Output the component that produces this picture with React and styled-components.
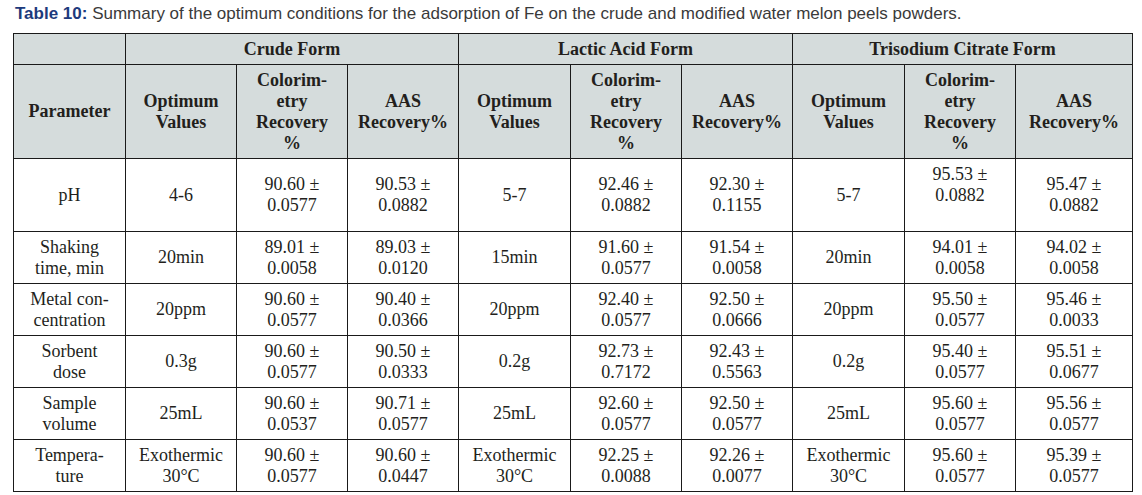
import React from "react";
import styled, { createGlobalStyle } from "styled-components";

const Global = createGlobalStyle`
  html, body { margin: 0; padding: 0; background: #ffffff; }
`;

const Page = styled.div`
  width: 1142px;
  height: 495px;
  padding: 4px 10px 0 13px;
  box-sizing: border-box;
  background: #fff;
`;

const Caption = styled.p`
  margin: 0 0 10px 2px;
  font-family: "Liberation Sans", Arial, sans-serif;
  font-size: 17px;
  line-height: 19px;
  color: #3a3a3a;
  white-space: nowrap;
`;

const Label = styled.b`
  color: #1d3a7c;
  font-weight: bold;
`;

const Table = styled.table`
  border-collapse: collapse;
  table-layout: fixed;
  width: 1119px;
  font-family: "Liberation Serif", "Times New Roman", serif;
  font-size: 18px;
  line-height: 21px;
  color: #231f1c;
  border: 1px solid #1a1a1a;
`;

const HeadCell = styled.th`
  background: #d5dcdc;
  border: 1px solid #1a1a1a;
  font-weight: bold;
  text-align: center;
  vertical-align: middle;
  padding: 0 4px;
  height: ${(p) => p.$h}px;
  box-sizing: border-box;
`;

const Cell = styled.td`
  border: 1px solid #1a1a1a;
  text-align: center;
  vertical-align: middle;
  padding: 0 4px;
  height: ${(p) => p.$h}px;
  box-sizing: border-box;
`;

const widths = [112, 111, 111, 111, 112, 111, 111, 112, 111, 117];

const Lines = ({ text }) => {
  const parts = text.split("\n");
  return parts.map((t, i) => (
    <React.Fragment key={i}>
      {t === "" ? "\u00a0" : t}
      {i < parts.length - 1 && <br />}
    </React.Fragment>
  ));
};

const rows = [
  {
    h: 73,
    cells: [
      "pH",
      "4-6",
      "90.60 ±\n0.0577",
      "90.53 ±\n0.0882",
      "5-7",
      "92.46 ±\n0.0882",
      "92.30 ±\n0.1155",
      "5-7",
      "95.53 ±\n0.0882\n",
      "95.47 ±\n0.0882",
    ],
  },
  {
    h: 52,
    cells: [
      "Shaking\ntime, min",
      "20min",
      "89.01 ±\n0.0058",
      "89.03 ±\n0.0120",
      "15min",
      "91.60 ±\n0.0577",
      "91.54 ±\n0.0058",
      "20min",
      "94.01 ±\n0.0058",
      "94.02 ±\n0.0058",
    ],
  },
  {
    h: 52,
    cells: [
      "Metal con-\ncentration",
      "20ppm",
      "90.60 ±\n0.0577",
      "90.40 ±\n0.0366",
      "20ppm",
      "92.40 ±\n0.0577",
      "92.50 ±\n0.0666",
      "20ppm",
      "95.50 ±\n0.0577",
      "95.46 ±\n0.0033",
    ],
  },
  {
    h: 52,
    cells: [
      "Sorbent\ndose",
      "0.3g",
      "90.60 ±\n0.0577",
      "90.50 ±\n0.0333",
      "0.2g",
      "92.73 ±\n0.7172",
      "92.43 ±\n0.5563",
      "0.2g",
      "95.40 ±\n0.0577",
      "95.51 ±\n0.0677",
    ],
  },
  {
    h: 52,
    cells: [
      "Sample\nvolume",
      "25mL",
      "90.60 ±\n0.0537",
      "90.71 ±\n0.0577",
      "25mL",
      "92.60 ±\n0.0577",
      "92.50 ±\n0.0577",
      "25mL",
      "95.60 ±\n0.0577",
      "95.56 ±\n0.0577",
    ],
  },
  {
    h: 52,
    cells: [
      "Tempera-\nture",
      "Exothermic\n30°C",
      "90.60 ±\n0.0577",
      "90.60 ±\n0.0447",
      "Exothermic\n30°C",
      "92.25 ±\n0.0088",
      "92.26 ±\n0.0077",
      "Exothermic\n30°C",
      "95.60 ±\n0.0577",
      "95.39 ±\n0.0577",
    ],
  },
];

const groups = ["Crude Form", "Lactic Acid Form", "Trisodium Citrate Form"];
const subHeads = ["Optimum\nValues", "Colorim-\netry\nRecovery\n%", "AAS\nRecovery%"];

export default function App() {
  return (
    <Page>
      <Global />
      <Caption>
        <Label>Table 10:</Label> Summary of the optimum conditions for the adsorption of Fe on the crude and modified water melon peels powders.
      </Caption>
      <Table>
        <colgroup>
          {widths.map((w, i) => (
            <col key={i} style={{ width: w }} />
          ))}
        </colgroup>
        <thead>
          <tr>
            <HeadCell $h={31} />
            {groups.map((g) => (
              <HeadCell key={g} colSpan={3} $h={31}>
                {g}
              </HeadCell>
            ))}
          </tr>
          <tr>
            <HeadCell $h={94}>Parameter</HeadCell>
            {groups.flatMap((g) =>
              subHeads.map((s, i) => (
                <HeadCell key={g + i} $h={94}>
                  <Lines text={s} />
                </HeadCell>
              ))
            )}
          </tr>
        </thead>
        <tbody>
          {rows.map((r, ri) => (
            <tr key={ri}>
              {r.cells.map((c, ci) => (
                <Cell key={ci} $h={r.h}>
                  <Lines text={c} />
                </Cell>
              ))}
            </tr>
          ))}
        </tbody>
      </Table>
    </Page>
  );
}
